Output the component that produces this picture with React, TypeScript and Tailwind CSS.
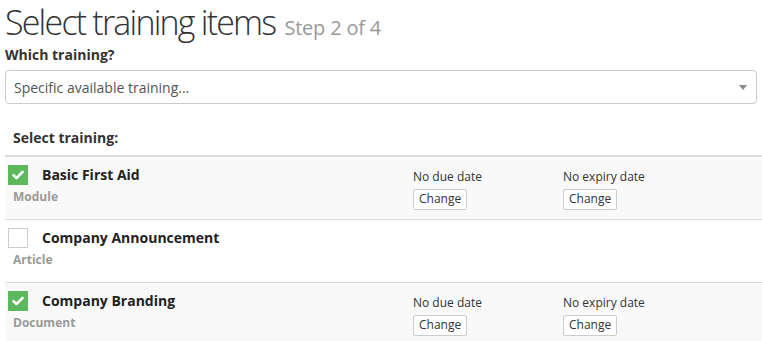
import React from "react";

type Item = { title: string; kind: string; checked: boolean; shaded: boolean };

const items: Item[] = [
  { title: "Basic First Aid", kind: "Module", checked: true, shaded: true },
  { title: "Company Announcement", kind: "Article", checked: false, shaded: false },
  { title: "Company Branding", kind: "Document", checked: true, shaded: true },
];

function Check({ checked }: { checked: boolean }) {
  if (checked) {
    return (
      <div className="w-[20px] h-[20px] bg-[#5cb85c] flex items-center justify-center">
        <svg width="12" height="10" viewBox="0 0 12 10">
          <path d="M1.5 5.2 L4.5 8 L10.5 2" stroke="#fff" strokeWidth="2.6" fill="none" strokeLinecap="round" strokeLinejoin="round" />
        </svg>
      </div>
    );
  }
  return <div className="w-[20px] h-[20px] bg-white border border-[#ccc]" />;
}

export default function App() {
  return (
    <div className="w-[762px] h-[341px] overflow-hidden bg-white text-[#333]" style={{ fontFamily: '"Open Sans", sans-serif' }}>
      <div className="pl-[5px] pr-[2px] flex items-baseline h-[44px]">
        <span className="pr-[2px] text-[34px] font-light leading-[44px] text-[#333] tracking-[-1.8px] whitespace-nowrap">Select training items</span>
        <span className="text-[20px] text-[#999] ml-[7px] tracking-[-0.2px] whitespace-nowrap">Step 2 of 4</span>
      </div>
      <div className="pl-[5px] text-[14px] font-bold leading-[20px] mt-[1px]">Which training?</div>
      <div className="pl-[5px] pr-[5px] mt-[5px]">
        <div className="h-[34px] border border-[#ccc] rounded-[4px] flex items-center justify-between pl-[8px] pr-[9px]">
          <span className="text-[14px] text-[#555]">Specific available training...</span>
          <svg width="8" height="5" viewBox="0 0 8 5"><path d="M0 0 L8 0 L4 5 Z" fill="#888" /></svg>
        </div>
      </div>
      <div className="pl-[13px] mt-[24px] text-[14px] font-bold leading-[20px]">Select training:</div>
      <div className="ml-[5px] mt-[7px] border-t-2 border-[#ddd]">
        {items.map((it, i) => (
          <div
            key={i}
            className={`flex border-b border-[#ddd] h-[63px] ${it.shaded ? "bg-[#f9f9f9]" : "bg-white"}`}
          >
            <div className="w-[408px] pl-[3px] pt-[8px]">
              <div className="flex items-center">
                <Check checked={it.checked} />
                <span className="ml-[14px] text-[14px] font-bold leading-[20px] text-[#222]">{it.title}</span>
              </div>
              <div className="pl-[5px] mt-[2px] text-[12px] font-bold text-[#999] leading-[20px]">{it.kind}</div>
            </div>
            {it.checked && (
              <>
                <div className="w-[150px] pt-[12px]">
                  <div className="text-[12px] leading-[16px] text-[#333]">No due date</div>
                  <button className="mt-[1px] h-[21px] px-[5px] border border-[#ccc] rounded-[2px] bg-white text-[12px] text-[#333] leading-[18px]">Change</button>
                </div>
                <div className="w-[150px] pt-[12px]">
                  <div className="text-[12px] leading-[16px] text-[#333]">No expiry date</div>
                  <button className="mt-[1px] h-[21px] px-[5px] border border-[#ccc] rounded-[2px] bg-white text-[12px] text-[#333] leading-[18px]">Change</button>
                </div>
              </>
            )}
          </div>
        ))}
      </div>
    </div>
  );
}
